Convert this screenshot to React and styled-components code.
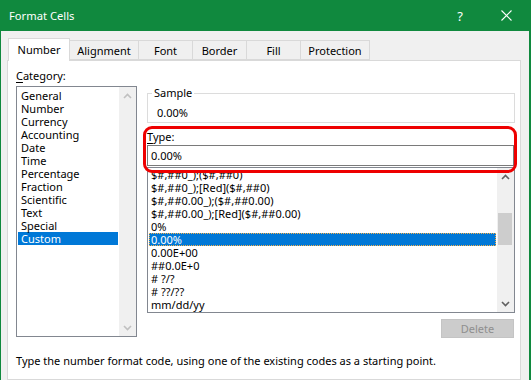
import React from 'react'
import styled, { createGlobalStyle } from 'styled-components'

const GlobalStyle = createGlobalStyle`
  html, body {
    margin: 0;
    padding: 0;
    background: #f0f0f0;
  }
  body {
    font-family: "Noto Sans", "Liberation Sans", sans-serif;
    font-size: 11px;
    color: #000;
  }
`

const Window = styled.div`
  width: 531px;
  height: 380px;
  box-sizing: border-box;
  border-left: 1px solid #10893e;
  border-right: 2px solid #10893e;
  background: #f0f0f0;
  overflow: hidden;
  display: flex;
  flex-direction: column;
`

const TitleBar = styled.div`
  flex: none;
  height: 31px;
  background: #10893e;
  color: #fff;
  display: flex;
  align-items: center;
  padding-left: 8px;
`

const Title = styled.div`
  flex: 1;
  font-size: 11.2px;
`

const HelpButton = styled.div`
  width: 46px;
  text-align: center;
  font-size: 13px;
`

const CloseButton = styled.div`
  width: 46px;
  display: flex;
  justify-content: center;
  align-items: center;
`

const TabStrip = styled.div`
  display: flex;
  align-items: flex-end;
  margin-top: 7px;
  padding-left: 6px;
  position: relative;
  z-index: 1;
`

const Tab = styled.div`
  box-sizing: border-box;
  width: ${p => p.$w}px;
  height: ${p => (p.$active ? 23 : 20)}px;
  margin-left: -1px;
  margin-bottom: ${p => (p.$active ? -1 : 0)}px;
  border: 1px solid #d9d9d9;
  border-bottom: ${p => (p.$active ? 'none' : '1px solid #d9d9d9')};
  background: ${p => (p.$active ? '#fff' : '#f0f0f0')};
  display: flex;
  justify-content: center;
  align-items: center;
  padding-bottom: ${p => (p.$active ? 2 : 0)}px;
  &:first-child {
    margin-left: 1px;
  }
`

const Panel = styled.div`
  flex: 1;
  margin: 0 8px 0 6px;
  border: 1px solid #d9d9d9;
  background: #fff;
  padding: 7px 5px 0 8px;
  display: flex;
  flex-direction: column;
`

const Body = styled.div`
  display: flex;
  gap: 10px;
`

const LeftColumn = styled.div`
  width: 121px;
  display: flex;
  flex-direction: column;
`

const RightColumn = styled.div`
  flex: 1;
  display: flex;
  flex-direction: column;
`

const FieldLabel = styled.div`
  line-height: 16px;
  height: 16px;
  margin-bottom: ${p => p.$gap || 0}px;
  u {
    text-decoration: underline;
    text-underline-offset: 2px;
  }
`

const ListBox = styled.div`
  box-sizing: border-box;
  height: ${p => p.$h}px;
  border: 1px solid #828790;
  background: #fff;
  display: flex;
`

const Items = styled.div`
  flex: 1;
  padding-top: ${p => p.$pt || 0}px;
  overflow: hidden;
`

const Item = styled.div`
  height: 13px;
  line-height: 13px;
  margin: 0 1px;
  padding-left: ${p => p.$pl}px;
  white-space: nowrap;
  box-sizing: border-box;
  background: ${p => (p.$selected ? '#0078d7' : 'transparent')};
  color: ${p => (p.$selected ? '#fff' : '#000')};
  outline: ${p => (p.$focus ? '1px dotted #f7b04a' : 'none')};
  outline-offset: -1px;
`

const ScrollBar = styled.div`
  width: 17px;
  background: #f0f0f0;
  display: flex;
  flex-direction: column;
`

const ArrowCell = styled.div`
  height: 17px;
  display: flex;
  align-items: center;
  justify-content: center;
`

const Track = styled.div`
  flex: 1;
`

const Thumb = styled.div`
  margin: ${p => p.$top}px 2px 0 1px;
  height: ${p => p.$h}px;
  background: #cdcdcd;
`

const SampleBox = styled.fieldset`
  margin: 17px 0 0;
  padding: 4px 9px 1px;
  border: 1px solid #dcdcdc;
  min-width: 0;
  legend {
    padding: 0 2px;
    margin-left: -5px;
    line-height: 16px;
  }
`

const SampleValue = styled.div`
  line-height: 16px;
`

const TypeSection = styled.div`
  position: relative;
  margin-top: 6px;
  display: flex;
  flex-direction: column;
`

const TypeInput = styled.div`
  box-sizing: border-box;
  height: 21px;
  line-height: 19px;
  border: 1px solid #7a7a7a;
  padding-left: 3px;
  margin-bottom: 1px;
  margin-right: 1px;
`

const Highlight = styled.div`
  position: absolute;
  left: -4px;
  top: -3px;
  width: 374px;
  height: 47px;
  box-sizing: border-box;
  border: 3px solid #ee0000;
  border-radius: 9px;
  pointer-events: none;
`

const DeleteButton = styled.div`
  align-self: flex-end;
  margin: 6px 1px 0 0;
  width: 73px;
  height: 19px;
  box-sizing: border-box;
  background: #cccccc;
  border: 1px solid #c4c4c4;
  color: #8f8f8f;
  display: flex;
  align-items: center;
  justify-content: center;
`

const Hint = styled.div`
  margin-top: 15px;
  line-height: 16px;
`

const Chevron = ({ up, color }) => (
  <svg width="9" height="6" viewBox="0 0 9 6">
    <path
      d={up ? 'M1 5 L4.5 1.5 L8 5' : 'M1 1 L4.5 4.5 L8 1'}
      fill="none"
      stroke={color}
      strokeWidth="1.6"
    />
  </svg>
)

const categories = [
  'General', 'Number', 'Currency', 'Accounting', 'Date', 'Time',
  'Percentage', 'Fraction', 'Scientific', 'Text', 'Special', 'Custom',
]

const formats = [
  '$#,##0_);($#,##0)',
  '$#,##0_);[Red]($#,##0)',
  '$#,##0.00_);($#,##0.00)',
  '$#,##0.00_);[Red]($#,##0.00)',
  '0%',
  '0.00%',
  '0.00E+00',
  '##0.0E+0',
  '# ?/?',
  '# ??/??',
  'mm/dd/yy',
]

const tabs = [
  ['Number', 62],
  ['Alignment', 70],
  ['Font', 55],
  ['Border', 55],
  ['Fill', 55],
  ['Protection', 70],
]

export default function App() {
  return (
    <>
      <GlobalStyle />
      <Window>
        <TitleBar>
          <Title>Format Cells</Title>
          <HelpButton>?</HelpButton>
          <CloseButton>
            <svg width="11" height="11" viewBox="0 0 11 11">
              <path d="M0.5 0.5 L10.5 10.5 M10.5 0.5 L0.5 10.5" stroke="#fff" strokeWidth="1.1" />
            </svg>
          </CloseButton>
        </TitleBar>

        <TabStrip>
          {tabs.map(([name, w], i) => (
            <Tab key={name} $w={w} $active={i === 0}>{name}</Tab>
          ))}
        </TabStrip>

        <Panel>
          <Body>
            <LeftColumn>
              <FieldLabel $gap={2}><u>C</u>ategory:</FieldLabel>
              <ListBox $h={251}>
                <Items $pt={2}>
                  {categories.map(c => (
                    <Item key={c} $pl={3} $selected={c === 'Custom'}>{c}</Item>
                  ))}
                </Items>
                <ScrollBar>
                  <ArrowCell><Chevron up color="#c0c0c0" /></ArrowCell>
                  <Track />
                  <ArrowCell><Chevron color="#c0c0c0" /></ArrowCell>
                </ScrollBar>
              </ListBox>
            </LeftColumn>

            <RightColumn>
              <SampleBox>
                <legend>Sample</legend>
                <SampleValue>0.00%</SampleValue>
              </SampleBox>

              <TypeSection>
                <FieldLabel><u>T</u>ype:</FieldLabel>
                <TypeInput>0.00%</TypeInput>
                <ListBox $h={146}>
                  <Items>
                    {formats.map(f => (
                      <Item key={f} $pl={2} $selected={f === '0.00%'} $focus={f === '0.00%'}>{f}</Item>
                    ))}
                  </Items>
                  <ScrollBar>
                    <ArrowCell><Chevron up color="#606060" /></ArrowCell>
                    <Track>
                      <Thumb $top={28} $h={32} />
                    </Track>
                    <ArrowCell><Chevron color="#606060" /></ArrowCell>
                  </ScrollBar>
                </ListBox>
                <Highlight />
              </TypeSection>

              <DeleteButton>Delete</DeleteButton>
            </RightColumn>
          </Body>

          <Hint>Type the number format code, using one of the existing codes as a starting point.</Hint>
        </Panel>
      </Window>
    </>
  )
}
